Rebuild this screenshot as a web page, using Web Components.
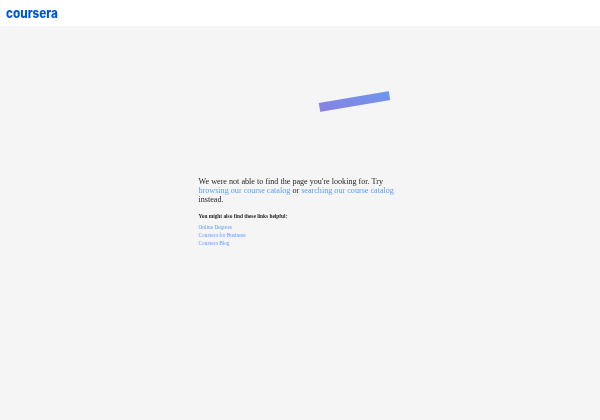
<!DOCTYPE html>
<html>
<head>
<meta charset="utf-8">
<style>
  html, body { margin: 0; height: 100%; background: #f5f5f5; overflow: hidden; }
</style>
</head>
<body>
<error-page></error-page>

<script>
class SiteHeader extends HTMLElement {
  constructor() {
    super();
    this.attachShadow({ mode: 'open' });
    this.shadowRoot.innerHTML = `
      <style>
        :host {
          display: flex;
          align-items: center;
          height: 26px;
          padding-left: 6px;
          background: #fff;
        }
        .logo {
          font: 800 13px/1 "Inter", sans-serif;
          color: #0056d2;
          transform: scaleX(.9);
          transform-origin: left center;
          filter: blur(0.3px);
        }
      </style>
      <span class="logo">coursera</span>
    `;
  }
}

class BrokenBar extends HTMLElement {
  constructor() {
    super();
    this.attachShadow({ mode: 'open' });
    this.shadowRoot.innerHTML = `
      <style>
        :host {
          display: flex;
          justify-content: center;
          height: 150.6px;
          padding-top: 71px;
          box-sizing: border-box;
        }
        .bar {
          width: 71px;
          height: 9px;
          margin-left: 109px;
          background: linear-gradient(20deg, #8c7fe2, #6a98ee);
          transform: rotate(-9.6deg);
          filter: blur(0.3px);
        }
      </style>
      <div class="bar"></div>
    `;
  }
}

class NotFoundMessage extends HTMLElement {
  constructor() {
    super();
    this.attachShadow({ mode: 'open' });
    this.shadowRoot.innerHTML = `
      <style>
        :host {
          display: block;
          width: 204px;
          margin-left: 198.5px;
          font-family: "Liberation Serif", serif;
          color: #1f1f1f;
          filter: blur(0.35px);
        }
        a { color: #5a9df2; text-decoration: none; }
        p { margin: 0; font-size: 8.15px; line-height: 9.4px; }
        h2 { margin: 7.4px 0 0; font-size: 5.35px; line-height: 8px; font-weight: 700; }
        ul { list-style: none; margin: 3px 0 0; padding: 0; font-size: 5.35px; line-height: 8px; }
      </style>
      <p>We were not able to find the page you're looking for. Try
        <a href="#">browsing our course catalog</a> or
        <a href="#">searching our course catalog</a> instead.</p>
      <h2>You might also find these links helpful:</h2>
      <ul>
        <li><a href="#">Online Degrees</a></li>
        <li><a href="#">Coursera for Business</a></li>
        <li><a href="#">Coursera Blog</a></li>
      </ul>
    `;
  }
}

class ErrorPage extends HTMLElement {
  constructor() {
    super();
    this.attachShadow({ mode: 'open' });
    this.shadowRoot.innerHTML = `
      <style>
        :host { display: block; min-height: 100%; }
      </style>
      <site-header></site-header>
      <broken-bar></broken-bar>
      <not-found-message></not-found-message>
    `;
  }
}

customElements.define('site-header', SiteHeader);
customElements.define('broken-bar', BrokenBar);
customElements.define('not-found-message', NotFoundMessage);
customElements.define('error-page', ErrorPage);
</script>
</body>
</html>
